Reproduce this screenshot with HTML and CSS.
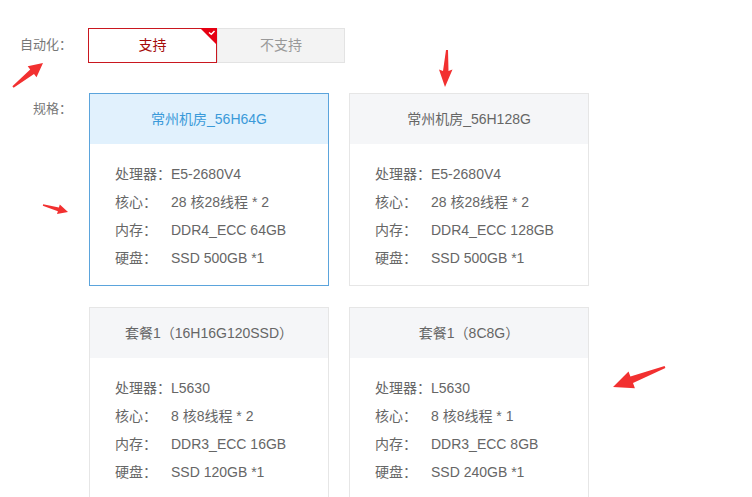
FILE: index.html
```html
<!DOCTYPE html>
<html lang="zh-CN">
<head>
    <meta charset="UTF-8">
    <title>规格选择</title>
    <link rel="stylesheet" href="styles.css">
</head>
<body>
    <div class="page">
        <div class="row row-auto">
            <div class="row-label">自动化：</div>
            <div class="switch">
                <div class="opt opt-on">支持
                    <span class="corner">
                        <svg width="17" height="17" viewBox="0 0 17 17"><polygon points="0,0 17,0 17,17" fill="#e60012"/><polyline points="9,4.5 11.3,6.3 14.5,3" fill="none" stroke="#fff" stroke-width="1.4"/></svg>
                    </span>
                </div>
                <div class="opt">不支持</div>
            </div>
        </div>

        <div class="row row-spec">
            <div class="row-label">规格：</div>
            <div class="cards">
                <div class="card active">
                    <div class="card-head">常州机房_56H64G</div>
                    <div class="card-body">
                        <div class="line"><span class="k">处理器：</span>E5-2680V4</div>
                        <div class="line"><span class="k">核心：</span>28 核28线程 * 2</div>
                        <div class="line"><span class="k">内存：</span>DDR4_ECC 64GB</div>
                        <div class="line"><span class="k">硬盘：</span>SSD 500GB *1</div>
                    </div>
                </div>
                <div class="card">
                    <div class="card-head">常州机房_56H128G</div>
                    <div class="card-body">
                        <div class="line"><span class="k">处理器：</span>E5-2680V4</div>
                        <div class="line"><span class="k">核心：</span>28 核28线程 * 2</div>
                        <div class="line"><span class="k">内存：</span>DDR4_ECC 128GB</div>
                        <div class="line"><span class="k">硬盘：</span>SSD 500GB *1</div>
                    </div>
                </div>
                <div class="card">
                    <div class="card-head">套餐1（16H16G120SSD）</div>
                    <div class="card-body">
                        <div class="line"><span class="k">处理器：</span>L5630</div>
                        <div class="line"><span class="k">核心：</span>8 核8线程 * 2</div>
                        <div class="line"><span class="k">内存：</span>DDR3_ECC 16GB</div>
                        <div class="line"><span class="k">硬盘：</span>SSD 120GB *1</div>
                    </div>
                </div>
                <div class="card">
                    <div class="card-head">套餐1（8C8G）</div>
                    <div class="card-body">
                        <div class="line"><span class="k">处理器：</span>L5630</div>
                        <div class="line"><span class="k">核心：</span>8 核8线程 * 1</div>
                        <div class="line"><span class="k">内存：</span>DDR3_ECC 8GB</div>
                        <div class="line"><span class="k">硬盘：</span>SSD 240GB *1</div>
                    </div>
                </div>
            </div>
        </div>

        <!-- 标注箭头 -->
        <svg class="marks" width="752" height="497" viewBox="0 0 752 497">
            <g fill="#f23030">
                <polygon points="13.6,87.8 34,74.1 36.5,77.2 43,63 27.7,66.3 30.2,69.4 12.4,86.2"/>
                <polygon points="446,50 448,50 448.5,71 452.5,69.5 445,87 439,69.5 443,71"/>
                <polygon points="42.8,205.7 57.9,211.2 57,214.1 68,212 59.8,204.5 58.9,207.4 43.2,204.3"/>
                <polygon points="665.4,367.9 633,383.1 634.9,388.2 613,387 628.5,371.4 630.4,376.5 664.6,366.1"/>
            </g>
        </svg>
    </div>
</body>
</html>
```

FILE: styles.css
```css
body {
    margin: 0;
    background-color: #fff;
    font-family: "Liberation Sans", "Noto Sans CJK SC", sans-serif;
    color: #666;
    font-size: 14px;
}
.page {
    position: relative;
    width: 752px;
    height: 497px;
    overflow: hidden;
    padding-top: 28px;
    box-sizing: border-box;
}
.row {
    display: flex;
}
.row-label {
    width: 88px;
    padding-right: 16px;
    box-sizing: border-box;
    text-align: right;
    font-family: "Liberation Sans", "Noto Sans CJK JP", sans-serif;
    font-size: 13px;
    color: #777;
    white-space: nowrap;
}
.row-auto .row-label {
    line-height: 33px;
}
.row-spec {
    margin-top: 30px;
}
.row-spec .row-label {
    padding-top: 6px;
    line-height: 20px;
}
.switch {
    display: flex;
}
.opt {
    position: relative;
    width: 128px;
    height: 35px;
    line-height: 33px;
    box-sizing: border-box;
    text-align: center;
    border: 1px solid #e3e3e3;
    background-color: #f3f3f3;
    color: #999;
}
.opt-on {
    width: 129px;
    border-color: #c9171f;
    background-color: #fff;
    color: #a50b0b;
}
.corner {
    position: absolute;
    top: -1px;
    right: -1px;
    width: 17px;
    height: 17px;
    line-height: 0;
}
.cards {
    display: grid;
    grid-template-columns: 240px 240px;
    column-gap: 20px;
    row-gap: 21px;
    margin-left: 1px;
}
.card {
    border: 1px solid #e6e6e6;
    background-color: #fff;
}
.card-head {
    height: 50px;
    line-height: 50px;
    text-align: center;
    background-color: #f5f6f8;
    color: #666;
}
.card.active {
    border-color: #5ba4dc;
}
.card.active .card-head {
    background-color: #e1f1fd;
    color: #3a9ad9;
}
.card-body {
    padding: 16px 25px 13px;
}
.line {
    line-height: 28px;
    white-space: nowrap;
}
.line .k {
    display: inline-block;
    width: 56px;
    font-family: "Liberation Sans", "Noto Sans CJK JP", sans-serif;
    color: #666;
}
.marks {
    position: absolute;
    left: 0;
    top: 0;
    pointer-events: none;
}
```
